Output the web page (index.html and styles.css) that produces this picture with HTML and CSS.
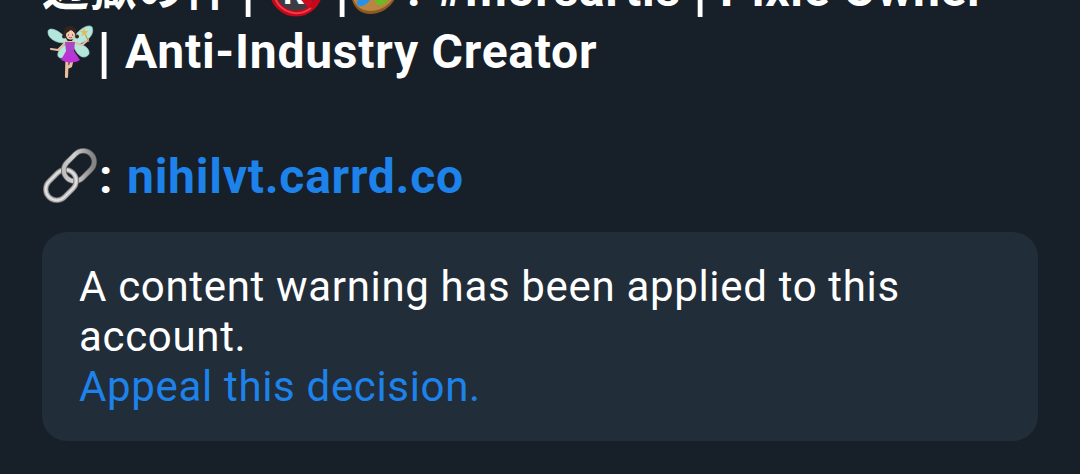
FILE: index.html
```html
<!DOCTYPE html>
<html lang="en">
<head>
    <meta charset="UTF-8">
    <meta name="viewport" content="width=device-width, initial-scale=1.0">
    <title>Profile</title>
    <link rel="stylesheet" href="styles.css">
</head>
<body>

    <!-- Profile bio -->
    <div class="bio">
        <div class="bio-line">
            <span class="jp">辺獄の件</span>
            <span class="bar bar-first">|</span>
            <svg class="emoji no-entry" viewBox="0 0 54 54">
                <circle cx="27" cy="27" r="24" fill="#3b3d42"/>
                <text class="badge-letter" x="14" y="41">R</text>
                <path d="M10 10L44 44" stroke="#d30a1d" stroke-width="7"/>
                <circle cx="27" cy="27" r="23.5" fill="none" stroke="#c9071a" stroke-width="6"/>
                <path d="M6 35A23 23 0 0 0 42 45" fill="none" stroke="#e8404e" stroke-width="2"/>
            </svg>
            <span class="bar bar-second">|</span>
            <svg class="emoji palette" viewBox="0 0 54 54">
                <path d="M27 3C10 3 2 16 3 31C4 44 12 51 22 51C38 51 50 38 51 22C51 10 40 3 27 3Z" fill="#8c5a20"/>
                <path d="M27 2C10 2 3 15 4 30C5 42 13 48 22 48C37 48 49 36 50 21C50 9 40 2 27 2Z" fill="#b88543"/>
                <ellipse cx="16" cy="37" rx="8" ry="4.5" transform="rotate(-38 16 37)" fill="#2492e8"/>
                <ellipse cx="34" cy="37" rx="7" ry="4.5" transform="rotate(-25 34 37)" fill="#69bd22"/>
            </svg>
            <span class="colon">:</span>
            <span class="tag">#morsartis</span>
            <span class="bar bar-third">|</span>
            <span class="owner">Pixie Owner</span>
        </div>

        <div class="bio-line">
            <svg class="emoji fairy" viewBox="0 0 48 56">
                <defs>
                    <linearGradient id="dress" x1="0" y1="0" x2="0" y2="1">
                        <stop offset="0" stop-color="#a54bbd"/>
                        <stop offset="1" stop-color="#c32be0"/>
                    </linearGradient>
                </defs>
                <!-- wings -->
                <g fill="#b4e6dc" stroke="#94cfc6" stroke-width=".7">
                    <path d="M21 18C15 7 3 2 1 7C0 14 9 20 21 19Z"/>
                    <path d="M25 18C28 7 41-1 45 3C48 10 41 19 27 21Z"/>
                    <path d="M20 20C12 23 8 32 13 34C18 35 21 27 21 22Z"/>
                    <path d="M26 21C31 35 39 35 42 30C43 23 35 20 27 19Z"/>
                </g>
                <!-- legs and arms -->
                <g fill="none" stroke="#e9bd9e" stroke-linecap="round" stroke-linejoin="round">
                    <path d="M20 36L19.500 52.500" stroke-width="3.200"/>
                    <path d="M25 36L23.500 42L21 43" stroke-width="3.200"/>
                    <path d="M18 19L11 26L4 25" stroke-width="2.200"/>
                    <path d="M28 19L35 21L41 16" stroke-width="2.200"/>
                </g>
                <path d="M18 17H28L27 21H19Z" fill="#e9bd9e"/>
                <path d="M18 18L28 18L27 27L33 36Q25 41 14 36L19 27Z" fill="url(#dress)"/>
                <!-- head -->
                <ellipse cx="23" cy="8" rx="6.500" ry="6" fill="#35251f"/>
                <circle cx="17" cy="12.500" r="2" fill="#35251f"/>
                <circle cx="30" cy="12.500" r="2" fill="#35251f"/>
                <ellipse cx="23.500" cy="11" rx="4.500" ry="4.700" fill="#f0c9ae"/>
                <path d="M19 9Q22 8 24 5Q26 8 29 9L27 4H20Z" fill="#35251f"/>
                <path d="M21.500 10.500V11.500M25.500 10.500V11.500" stroke="#4a2a20"/>
                <path d="M22 13.300Q23.500 14.500 25 13.300" fill="none" stroke="#c24548" stroke-width=".9"/>
                <!-- wand -->
                <path d="M38 10L42 18" stroke="#b98b3c" stroke-width="1"/>
                <path d="M37 4L38.300 7L41.500 7L39.200 9.200L40 12.300L37.300 10.500L34.500 12L35.400 9L33.200 7L36 6.800Z" fill="#e4bc56"/>
            </svg>
            <span class="bar bar-fourth">|</span>
            <span class="creator">Anti-Industry Creator</span>
        </div>

        <div class="bio-line bio-blank"></div>

        <div class="bio-line">
            <svg class="emoji chain" viewBox="0 0 56 56">
                <defs>
                    <linearGradient id="metal" x1="0" y1="0" x2="1" y2=".6">
                        <stop offset="0" stop-color="#b8b8b8"/>
                        <stop offset=".45" stop-color="#d2d2d2"/>
                        <stop offset="1" stop-color="#858585"/>
                    </linearGradient>
                    <clipPath id="front">
                        <path d="M14 10H25V27H14Z"/>
                    </clipPath>
                    <g id="upper-link">
                        <rect x="20" y="7" width="34" height="22" rx="11" transform="rotate(-45 37 18)" stroke="#5c5c5c" stroke-width="5.500"/>
                        <rect x="20" y="7" width="34" height="22" rx="11" transform="rotate(-45 37 18)" stroke="url(#metal)" stroke-width="4"/>
                    </g>
                </defs>
                <g fill="none">
                    <use href="#upper-link"/>
                    <rect x="2" y="26" width="34" height="22" rx="11" transform="rotate(-45 19 37)" stroke="#6c6c6c" stroke-width="5.500"/>
                    <rect x="2" y="26" width="34" height="22" rx="11" transform="rotate(-45 19 37)" stroke="#bdbdbd" stroke-width="4"/>
                    <rect x="2" y="26" width="34" height="22" rx="11" transform="rotate(-45 19 37)" stroke="#e6e6e6" stroke-width="1.500"/>
                    <use href="#upper-link" clip-path="url(#front)"/>
                </g>
            </svg>
            <span class="colon-link">:</span>
            <a class="link" href="#">nihilvt.carrd.co</a>
        </div>
    </div>

    <!-- Content warning -->
    <div class="warning">
        <p>A content warning has been applied to this account.</p>
        <a class="appeal" href="#">Appeal this decision.</a>
    </div>

</body>
</html>
```
FILE: styles.css
```css
* {
    margin: 0;
    padding: 0;
    box-sizing: border-box;
}
body {
    height: 474px;
    overflow: hidden;
    background-color: #171f28;
    color: #fff;
    font-family: Roboto, "Noto Sans CJK JP", sans-serif;
}
a {
    color: #1d82ea;
    text-decoration: none;
}
.bio {
    margin-top: -41px;
    padding-left: 42px;
    font-size: 48px;
    font-weight: 700;
    line-height: 62px;
    letter-spacing: 0.75px;
}
.bio-line {
    display: flex;
    height: 62px;
    white-space: nowrap;
}
.bio-blank {
    height: 63px;
}
.emoji {
    flex: none;
    overflow: visible;
}
.jp {
    width: 200px;
    font-size: 47px;
    line-height: 60px;
    letter-spacing: 0.5px;
}
.bar {
    font-size: 56px;
    line-height: 64px;
}
.bar-first {
    width: 27px;
    margin-left: -1px;
    margin-right: 1px;
}
.no-entry {
    width: 54px;
    height: 54px;
    margin-top: 4px;
}
.badge-letter {
    fill: #fff;
    font-size: 34px;
    font-weight: 700;
}
.bar-second {
    width: 25px;
    padding-left: 12px;
}
.palette {
    width: 54px;
    height: 54px;
    margin-top: 4px;
}
.colon {
    width: 34px;
    padding-left: 5px;
}
.tag {
    width: 257px;
}
.bar-third {
    width: 27px;
}
.fairy {
    width: 48px;
    height: 56px;
    margin: 3px 0 0 5px;
}
.bar-fourth {
    width: 30px;
    padding-left: 2px;
}
.chain {
    width: 56px;
    height: 56px;
    margin-top: 2px;
}
.colon-link {
    width: 29px;
    padding-left: 1px;
}
.warning {
    width: 996px;
    height: 209px;
    margin: 24px 0 0 42px;
    padding: 30px 37px;
    border-radius: 25px;
    background-color: #222d3a;
    font-size: 42px;
    line-height: 50px;
    letter-spacing: 0.67px;
}
```
